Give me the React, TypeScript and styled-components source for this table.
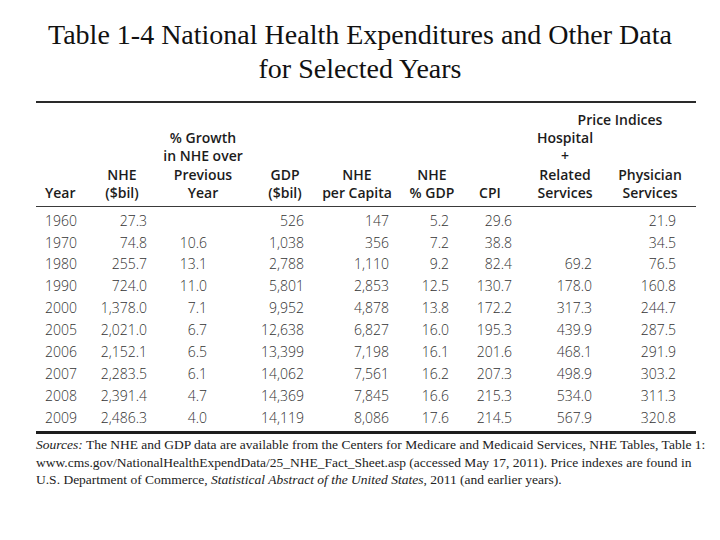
import React from 'react';
import styled, { createGlobalStyle } from 'styled-components';

const GlobalStyle = createGlobalStyle`
    html, body {
        margin: 0;
        padding: 0;
        background: #ffffff;
    }
`;

// column widths in px, the table itself is 660 wide with 12px free at the right
const COLUMN_WIDTHS = '56px 60px 102px 62px 82px 68px 48px 102px 68px';

type Column = {
    key: string;
    label: string[];
    pad: number;
};

const columns: Column[] = [
    { key: 'year', label: ['Year'], pad: 0 },
    { key: 'nhe', label: ['NHE', '($bil)'], pad: 5 },
    { key: 'growth', label: ['% Growth', 'in NHE over', 'Previous', 'Year'], pad: 47 },
    { key: 'gdp', label: ['GDP', '($bil)'], pad: 12 },
    { key: 'perCapita', label: ['NHE', 'per Capita'], pad: 9 },
    { key: 'pctGdp', label: ['NHE', '% GDP'], pad: 17 },
    { key: 'cpi', label: ['CPI'], pad: 2 },
    { key: 'hospital', label: ['Hospital', '+', 'Related', 'Services'], pad: 24 },
    { key: 'physician', label: ['Physician', 'Services'], pad: 8 },
];

const rows: string[][] = [
    ['1960', '27.3', '', '526', '147', '5.2', '29.6', '', '21.9'],
    ['1970', '74.8', '10.6', '1,038', '356', '7.2', '38.8', '', '34.5'],
    ['1980', '255.7', '13.1', '2,788', '1,110', '9.2', '82.4', '69.2', '76.5'],
    ['1990', '724.0', '11.0', '5,801', '2,853', '12.5', '130.7', '178.0', '160.8'],
    ['2000', '1,378.0', '7.1', '9,952', '4,878', '13.8', '172.2', '317.3', '244.7'],
    ['2005', '2,021.0', '6.7', '12,638', '6,827', '16.0', '195.3', '439.9', '287.5'],
    ['2006', '2,152.1', '6.5', '13,399', '7,198', '16.1', '201.6', '468.1', '291.9'],
    ['2007', '2,283.5', '6.1', '14,062', '7,561', '16.2', '207.3', '498.9', '303.2'],
    ['2008', '2,391.4', '4.7', '14,369', '7,845', '16.6', '215.3', '534.0', '311.3'],
    ['2009', '2,486.3', '4.0', '14,119', '8,086', '17.6', '214.5', '567.9', '320.8'],
];

const App: React.FC = () => {
    return (
        <Page>
            <GlobalStyle />
            <Title>
                Table 1-4 National Health Expenditures and Other Data
                <br />
                for Selected Years
            </Title>
            <TableWrap>
                <HeaderGrid>
                    <GroupLabel>Price Indices</GroupLabel>
                    {columns.map((column, index) => (
                        <HeaderCell key={column.key} $col={index + 1} $first={index === 0}>
                            {column.label.map((line) => (
                                <div key={line}>{line}</div>
                            ))}
                        </HeaderCell>
                    ))}
                </HeaderGrid>
                <Body>
                    {rows.map((record) => (
                        <Row key={record[0]}>
                            {record.map((value, index) => (
                                <Cell
                                    key={`${record[0]}-${columns[index].key}`}
                                    $first={index === 0}
                                    $pad={columns[index].pad}
                                >
                                    {value}
                                </Cell>
                            ))}
                        </Row>
                    ))}
                </Body>
                <Sources>
                    <i>Sources:</i> The NHE and GDP data are available from the Centers for Medicare and Medicaid
                    Services, NHE Tables, Table 1:
                    <br />
                    www.cms.gov/NationalHealthExpendData/25_NHE_Fact_Sheet.asp (accessed May 17, 2011). Price indexes
                    are found in
                    <br />
                    U.S. Department of Commerce, <i>Statistical Abstract of the United States</i>, 2011 (and earlier
                    years).
                </Sources>
            </TableWrap>
        </Page>
    );
};

const Page = styled.div`
    width: 720px;
    height: 540px;
    background: #ffffff;
    overflow: hidden;
`;

const Title = styled.h1`
    margin: 0;
    padding-top: 18px;
    font-family: 'Liberation Serif', 'Times New Roman', serif;
    font-weight: 400;
    font-size: 28px;
    line-height: 34px;
    color: #111111;
    text-align: center;
    white-space: nowrap;
`;

const TableWrap = styled.div`
    margin: 15px 0 0 36px;
    width: 660px;
`;

const HeaderGrid = styled.div`
    display: grid;
    grid-template-columns: ${COLUMN_WIDTHS};
    grid-template-rows: 18px auto;
    border-top: 2px solid #2a2a2a;
    border-bottom: 1.5px solid #3a3a3a;
    padding: 8px 0 4px;
    font-family: 'Open Sans', 'Noto Sans', sans-serif;
    font-weight: 600;
    font-size: 14px;
    line-height: 18.3px;
    color: #1c1c1c;
`;

const GroupLabel = styled.div`
    grid-column: 8 / 10;
    grid-row: 1;
    text-align: center;
    padding-left: 42px;
    white-space: nowrap;
`;

const HeaderCell = styled.div<{ $col: number; $first?: boolean }>`
    grid-column: ${(props) => props.$col};
    grid-row: 2;
    align-self: end;
    text-align: ${(props) => (props.$first ? 'left' : 'center')};
    padding-left: ${(props) => (props.$first ? '9px' : '0')};
    white-space: nowrap;
`;

const Body = styled.div`
    display: flex;
    flex-direction: column;
    padding: 2px 0 3px;
    border-bottom: 3px solid #1e1e1e;
`;

const Row = styled.div`
    display: grid;
    grid-template-columns: ${COLUMN_WIDTHS};
    height: 21.9px;
    align-items: center;
    font-family: 'Open Sans', 'Noto Sans', sans-serif;
    font-weight: 300;
    font-size: 14px;
    color: #333333;
`;

const Cell = styled.div<{ $first?: boolean; $pad: number }>`
    text-align: ${(props) => (props.$first ? 'left' : 'right')};
    padding-left: ${(props) => (props.$first ? '9px' : '0')};
    padding-right: ${(props) => props.$pad}px;
    white-space: nowrap;
`;

const Sources = styled.div`
    margin-top: 2px;
    font-family: 'Liberation Serif', 'Times New Roman', serif;
    font-size: 13.5px;
    line-height: 17.5px;
    color: #222222;
    white-space: nowrap;
`;

export default App;
